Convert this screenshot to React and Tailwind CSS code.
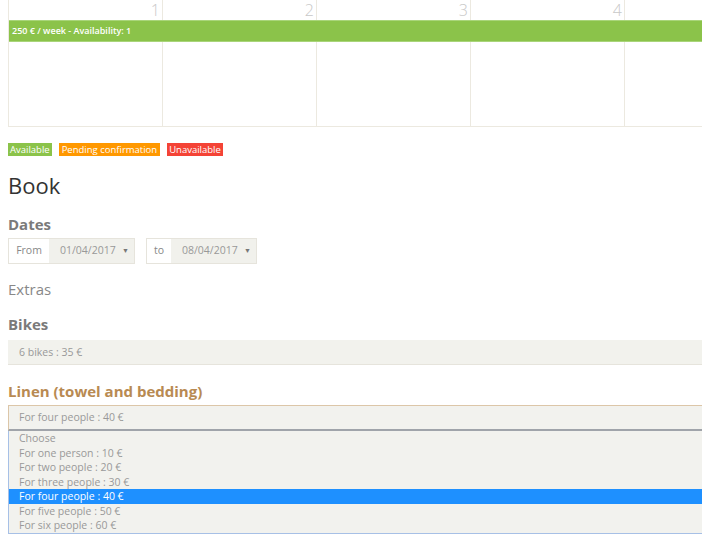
import { useState } from "react";

const days = [1, 2, 3, 4, null];

const linenOptions = [
  "Choose",
  "For one person : 10 €",
  "For two people : 20 €",
  "For three people : 30 €",
  "For four people : 40 €",
  "For five people : 50 €",
  "For six people : 60 €",
];

function DateGroup({ label, value, labelWidth }) {
  return (
    <div className="flex h-[26px] border border-[#e6e4dc] text-[10.5px]">
      <div
        className="flex items-center justify-center bg-white text-[#888]"
        style={{ width: labelWidth }}
      >
        {label}
      </div>
      <div className="flex items-center bg-[#f1f1ec] pl-[11px] pr-[5px] text-[#999]">
        <span className="w-[62px]">{value}</span>
        <span className="text-[7px] text-[#777]">▼</span>
      </div>
    </div>
  );
}

export default function App() {
  const [selected] = useState(4);

  return (
    <div
      className="w-[702px] h-[536px] overflow-hidden bg-white relative"
      style={{ fontFamily: '"Open Sans", "Liberation Sans", sans-serif' }}
    >
      {/* calendar week */}
      <div className="ml-[8px] w-[800px] border-b border-l border-[#ece9e0]">
        <div className="flex h-[20px]">
          {days.map((d, i) => (
            <div
              key={i}
              className="w-[154px] shrink-0 border-r border-[#ece9e0] pr-[2px] pt-[1px] text-right text-[16px] leading-[19px] font-light text-[#c8c8c8]"
            >
              {d}
            </div>
          ))}
        </div>
        <div className="h-[22px] bg-[#8bc34a] border-y border-[#a9d57a] pl-[3px] text-[9px] font-semibold leading-[20px] text-white">
          250 € / week - Availability: 1
        </div>
        <div className="flex h-[84px]">
          {days.map((d, i) => (
            <div key={i} className="w-[154px] shrink-0 border-r border-[#ece9e0]" />
          ))}
        </div>
      </div>

      {/* legend */}
      <div className="flex gap-[7px] ml-[8px] mt-[16px] text-[9.5px] leading-[13px] text-white">
        <span className="bg-[#8bc34a] px-[2px]">Available</span>
        <span className="bg-[#ff9800] px-[3px]">Pending confirmation</span>
        <span className="bg-[#f44336] px-[2px]">Unavailable</span>
      </div>

      <div className="px-[8px]">
        <h1 className="mt-[14px] text-[22px] leading-[30px] text-[#333]">Book</h1>

        <h3 className="mt-[13px] text-[15px] font-bold leading-[22px] text-[#7a7a7a]">
          Dates
        </h3>
        <div className="mt-[3px] flex gap-[11px]">
          <DateGroup label="From" value="01/04/2017" labelWidth={40} />
          <DateGroup label="to" value="08/04/2017" labelWidth={24} />
        </div>

        <h2 className="mt-[14px] text-[15px] leading-[22px] text-[#888]">Extras</h2>

        <h3 className="mt-[13px] text-[15px] font-bold leading-[22px] text-[#7a7a7a]">
          Bikes
        </h3>
        <div className="mt-[5px] mr-[-8px] h-[25px] bg-[#f2f2ed] border-b border-[#e6e4dc] pl-[11px] text-[10.5px] leading-[24px] text-[#999]">
          6 bikes : 35 €
        </div>

        <h3 className="mt-[15px] text-[15px] font-bold leading-[22px] text-[#b88a52]">
          Linen (towel and bedding)
        </h3>
        <div className="mt-[3px] mr-[-8px] h-[26px] bg-[#f2f2ee] border-t border-l border-[#dcc6a8] border-b-2 border-b-[#a0a4aa] pl-[10px] text-[10.5px] leading-[23px] text-[#999]">
          {linenOptions[selected]}
        </div>
        <div className="mr-[-8px] bg-[#f2f2ee] border-l border-b border-[#a7c0e6]">
          {linenOptions.map((opt, i) => (
            <div
              key={opt}
              className={
                "h-[14.5px] pl-[10px] text-[10.5px] leading-[14.5px] " +
                (i === selected ? "bg-[#1e90ff] text-white" : "text-[#999]")
              }
            >
              {opt}
            </div>
          ))}
        </div>
      </div>
    </div>
  );
}
